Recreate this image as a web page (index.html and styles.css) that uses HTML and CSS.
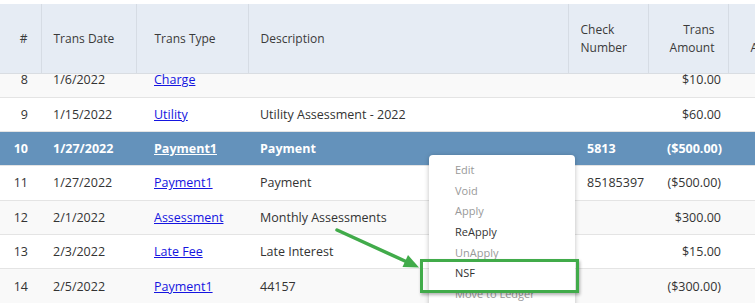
FILE: index.html
```html
<!DOCTYPE html>
<html lang="en">
<head>
    <meta charset="UTF-8">
    <meta name="viewport" content="width=device-width, initial-scale=1.0">
    <title>Transactions</title>
    <link rel="stylesheet" href="styles.css">
</head>
<body>
    <div class="grid">
        <div class="grid-head">
            <table class="head">
                <colgroup>
                    <col class="c-num"><col class="c-date"><col class="c-type"><col class="c-desc-h"><col class="c-check"><col class="c-amt"><col class="c-rest">
                </colgroup>
                <tr>
                    <th class="num">#</th>
                    <th>Trans Date</th>
                    <th class="type">Trans Type</th>
                    <th>Description</th>
                    <th>Check<br>Number</th>
                    <th class="amt">Trans<br>Amount</th>
                    <th class="amt">Open<br>Amount</th>
                </tr>
            </table>
        </div>

        <div class="grid-body">
            <table class="rows">
                <colgroup>
                    <col class="c-num"><col class="c-date"><col class="c-type"><col class="c-desc"><col class="c-check"><col class="c-amt"><col class="c-rest">
                </colgroup>
                <tr class="alt">
                    <td class="num">8</td><td>1/6/2022</td><td class="type"><a href="#">Charge</a></td><td></td><td></td><td class="amt">$10.00</td><td></td>
                </tr>
                <tr>
                    <td class="num">9</td><td>1/15/2022</td><td class="type"><a href="#">Utility</a></td><td>Utility Assessment - 2022</td><td></td><td class="amt">$60.00</td><td></td>
                </tr>
                <tr class="selected">
                    <td class="num">10</td><td>1/27/2022</td><td class="type"><a href="#">Payment1</a></td><td>Payment</td><td>5813</td><td class="amt">($500.00)</td><td></td>
                </tr>
                <tr>
                    <td class="num">11</td><td>1/27/2022</td><td class="type"><a href="#">Payment1</a></td><td>Payment</td><td>85185397</td><td class="amt">($500.00)</td><td></td>
                </tr>
                <tr class="alt">
                    <td class="num">12</td><td>2/1/2022</td><td class="type"><a href="#">Assessment</a></td><td>Monthly Assessments</td><td></td><td class="amt">$300.00</td><td></td>
                </tr>
                <tr>
                    <td class="num">13</td><td>2/3/2022</td><td class="type"><a href="#">Late Fee</a></td><td>Late Interest</td><td></td><td class="amt">$15.00</td><td></td>
                </tr>
                <tr class="alt">
                    <td class="num">14</td><td>2/5/2022</td><td class="type"><a href="#">Payment1</a></td><td>44157</td><td></td><td class="amt">($300.00)</td><td></td>
                </tr>
            </table>
        </div>
    </div>

    <ul class="ctx-menu">
        <li class="off">Edit</li>
        <li class="off">Void</li>
        <li class="off">Apply</li>
        <li>ReApply</li>
        <li class="off">UnApply</li>
        <li>NSF</li>
        <li class="off">Move to Ledger</li>
    </ul>

    <!-- annotation -->
    <div class="callout-box"></div>
    <svg class="callout-arrow" width="100" height="60" viewBox="0 0 100 60">
        <line x1="2" y1="5" x2="71" y2="36.5" stroke="#41ab4a" stroke-width="3.5" stroke-linecap="round"/>
        <polygon points="84,42.5 73,30 67.5,42" fill="#41ab4a"/>
    </svg>
</body>
</html>
```

FILE: styles.css
```css
body {
    margin: 0;
    padding-top: 4px;
    height: 303px;
    box-sizing: border-box;
    overflow: hidden;
    background-color: #fff;
    font-family: "Open Sans", Arial, sans-serif;
    color: #333;
}

.grid {
    width: 755px;
    overflow: hidden;
}

table {
    border-collapse: collapse;
    table-layout: fixed;
}

.c-num { width: 41px; }
.c-date { width: 95px; }
.c-type { width: 112px; }
.c-desc-h { width: 320px; }
.c-desc { width: 327px; }
.c-check { width: 80px; }
.c-amt { width: 80px; }
.c-rest { width: 81px; }

.grid-head {
    background-color: #e6ecf4;
    border-bottom: 1px solid #d9dde2;
}

.head {
    width: 809px;
}

th {
    height: 69px;
    padding: 0 12px;
    border-right: 1px solid #d6dce4;
    font-size: 12px;
    font-weight: normal;
    color: #3a3a3a;
    text-align: left;
    line-height: 18px;
    box-sizing: border-box;
}

th.num,
td.num {
    text-align: right;
    padding-right: 13px;
}

th.type,
td.type {
    padding-left: 18px;
}

th.amt {
    text-align: right;
    padding-right: 13px;
}

.grid-body {
    height: 229px;
    overflow: hidden;
}

.rows {
    width: 816px;
    margin-top: -11.4px;
}

td {
    height: 34.4px;
    padding: 0 12px;
    border-bottom: 1px solid #e4e4e4;
    font-size: 12.5px;
    white-space: nowrap;
    box-sizing: border-box;
}

td.amt {
    text-align: right;
    padding-right: 14px;
}

tr.alt td {
    background-color: #f9f9f9;
}

a {
    color: #1515e0;
    text-decoration: underline;
}

tr.selected td {
    background-color: #6492bb;
    color: #fff;
    font-weight: bold;
}

tr.selected a {
    color: #fff;
}

.ctx-menu {
    position: absolute;
    left: 429px;
    top: 155px;
    width: 146px;
    height: 160px;
    margin: 0;
    padding: 5px 0 0 0;
    list-style: none;
    background-color: #fff;
    border-radius: 4px;
    box-shadow: 0 1px 5px rgba(0, 0, 0, 0.25);
    font-size: 11px;
    box-sizing: border-box;
}

.ctx-menu li {
    height: 20.7px;
    line-height: 20.7px;
    padding-left: 26px;
    color: #333;
}

.ctx-menu li.off {
    color: #999;
}

.callout-box {
    position: absolute;
    left: 420px;
    top: 259px;
    width: 159px;
    height: 34px;
    border: 3.5px solid #41ab4a;
    box-sizing: border-box;
    box-shadow: 1px 2px 3px rgba(0, 0, 0, 0.3);
}

.callout-arrow {
    position: absolute;
    left: 335px;
    top: 225px;
}
```
